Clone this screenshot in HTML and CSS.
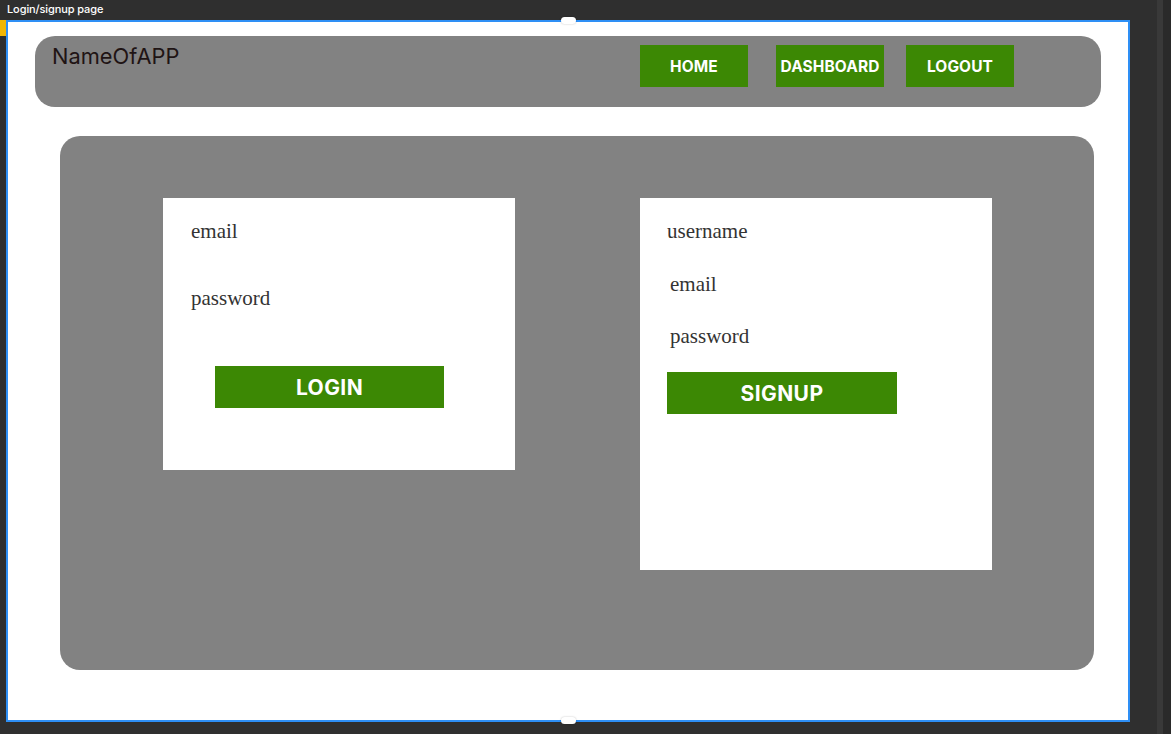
FILE: index.html
```html
<!DOCTYPE html>
<html lang="en">
<head>
<meta charset="utf-8">
<title>Login/signup page</title>
<link rel="stylesheet" href="styles.css">
</head>
<body>
<div class="workspace">
  <div class="frame-label">Login/signup page</div>
  <div class="frame-row">
    <div class="marker"></div>
    <div class="frame">
      <span class="handle handle-top"></span>
      <span class="handle handle-bottom"></span>
      <header class="topbar">
        <div class="brand">NameOfAPP</div>
        <nav class="nav">
          <a class="nav-btn">HOME</a>
          <a class="nav-btn nav-btn-wide-gap">DASHBOARD</a>
          <a class="nav-btn">LOGOUT</a>
        </nav>
      </header>
      <main class="panel">
        <section class="card card-login">
          <div class="field">email</div>
          <div class="field field-login-pass">password</div>
          <button class="action action-login">LOGIN</button>
        </section>
        <section class="card card-signup">
          <div class="field">username</div>
          <div class="field field-indent field-su-email">email</div>
          <div class="field field-indent field-su-pass">password</div>
          <button class="action action-signup">SIGNUP</button>
        </section>
      </main>
    </div>
  </div>
</div>
<div class="scroll-col">
  <div class="scroll-track"></div>
  <div class="scroll-edge"></div>
</div>
</body>
</html>
```

FILE: styles.css
```css
html, body {
  margin: 0;
  padding: 0;
  height: 100%;
}
body {
  background: #2f2f2f;
  display: flex;
  overflow: hidden;
  font-family: Inter, "Liberation Sans", sans-serif;
}
.workspace {
  flex: 1;
}
.frame-label {
  height: 20px;
  line-height: 19px;
  padding-left: 7px;
  color: #ffffff;
  font-size: 11px;
  font-weight: 500;
  letter-spacing: -0.1px;
}
.frame-row {
  display: flex;
}
.marker {
  width: 6px;
  height: 16px;
  background: #f2b705;
  flex: none;
}
.frame {
  position: relative;
  box-sizing: border-box;
  width: 1124px;
  height: 702px;
  background: #ffffff;
  border: 2px solid #2e8ff5;
  flex: none;
}
.handle {
  position: absolute;
  left: 553px;
  width: 15px;
  height: 7px;
  border-radius: 4px;
  background: #ffffff;
  box-shadow: 0 0 2px rgba(0,0,0,0.25);
}
.handle-top { top: -5px; }
.handle-bottom { bottom: -4px; }

.topbar {
  box-sizing: border-box;
  margin: 14px 0 0 27px;
  width: 1066px;
  height: 71px;
  background: #828282;
  border-radius: 20px;
  display: flex;
  justify-content: space-between;
  align-items: flex-start;
  padding: 9px 87px 0 17px;
}
.brand {
  font-family: Inter, "Liberation Sans", sans-serif;
  font-size: 21.8px;
  line-height: 26px;
  margin-top: -2px;
  color: #1f1414;
  font-weight: 400;
}
.nav {
  display: flex;
  gap: 22px;
}
.nav-btn {
  box-sizing: border-box;
  width: 108px;
  height: 42px;
  background: #3c8804;
  color: #ffffff;
  font-weight: 700;
  font-size: 15.5px;
  letter-spacing: 0.1px;
  display: flex;
  align-items: center;
  justify-content: center;
  white-space: nowrap;
}
.nav-btn-wide-gap {
  margin-left: 6px;
}

.panel {
  box-sizing: border-box;
  margin: 29px 0 0 52px;
  width: 1034px;
  height: 534px;
  background: #828282;
  border-radius: 20px;
  display: flex;
  align-items: flex-start;
  gap: 125px;
  padding: 62px 0 0 103px;
}
.card {
  box-sizing: border-box;
  width: 352px;
  background: #ffffff;
  display: flex;
  flex-direction: column;
  align-items: flex-start;
  padding-top: 21px;
}
.card-login {
  height: 272px;
  padding-left: 28px;
}
.card-signup {
  height: 372px;
  padding-left: 27px;
}
.field {
  font-family: "Liberation Serif", "DejaVu Serif", serif;
  font-size: 21px;
  line-height: 24px;
  height: 24px;
  color: #333333;
}
.field-login-pass { margin-top: 43px; }
.field-indent { padding-left: 3px; }
.field-su-email { margin-top: 29px; }
.field-su-pass { margin-top: 28px; }

.action {
  box-sizing: border-box;
  width: 230px;
  height: 42px;
  border: none;
  background: #3c8804;
  color: #ffffff;
  font-family: Inter, "Liberation Sans", sans-serif;
  font-weight: 700;
  font-size: 21px;
  letter-spacing: 0.4px;
  padding: 0;
  display: flex;
  align-items: center;
  justify-content: center;
}
.action-login {
  margin: 56px 0 0 24px;
  width: 229px;
}
.action-signup {
  margin-top: 24px;
}

.scroll-col {
  display: flex;
  flex: none;
  width: 41px;
  padding-left: 27px;
  box-sizing: border-box;
}
.scroll-track {
  width: 6px;
  background: #393939;
}
.scroll-edge {
  flex: 1;
  background: #2a2a2a;
}
```
